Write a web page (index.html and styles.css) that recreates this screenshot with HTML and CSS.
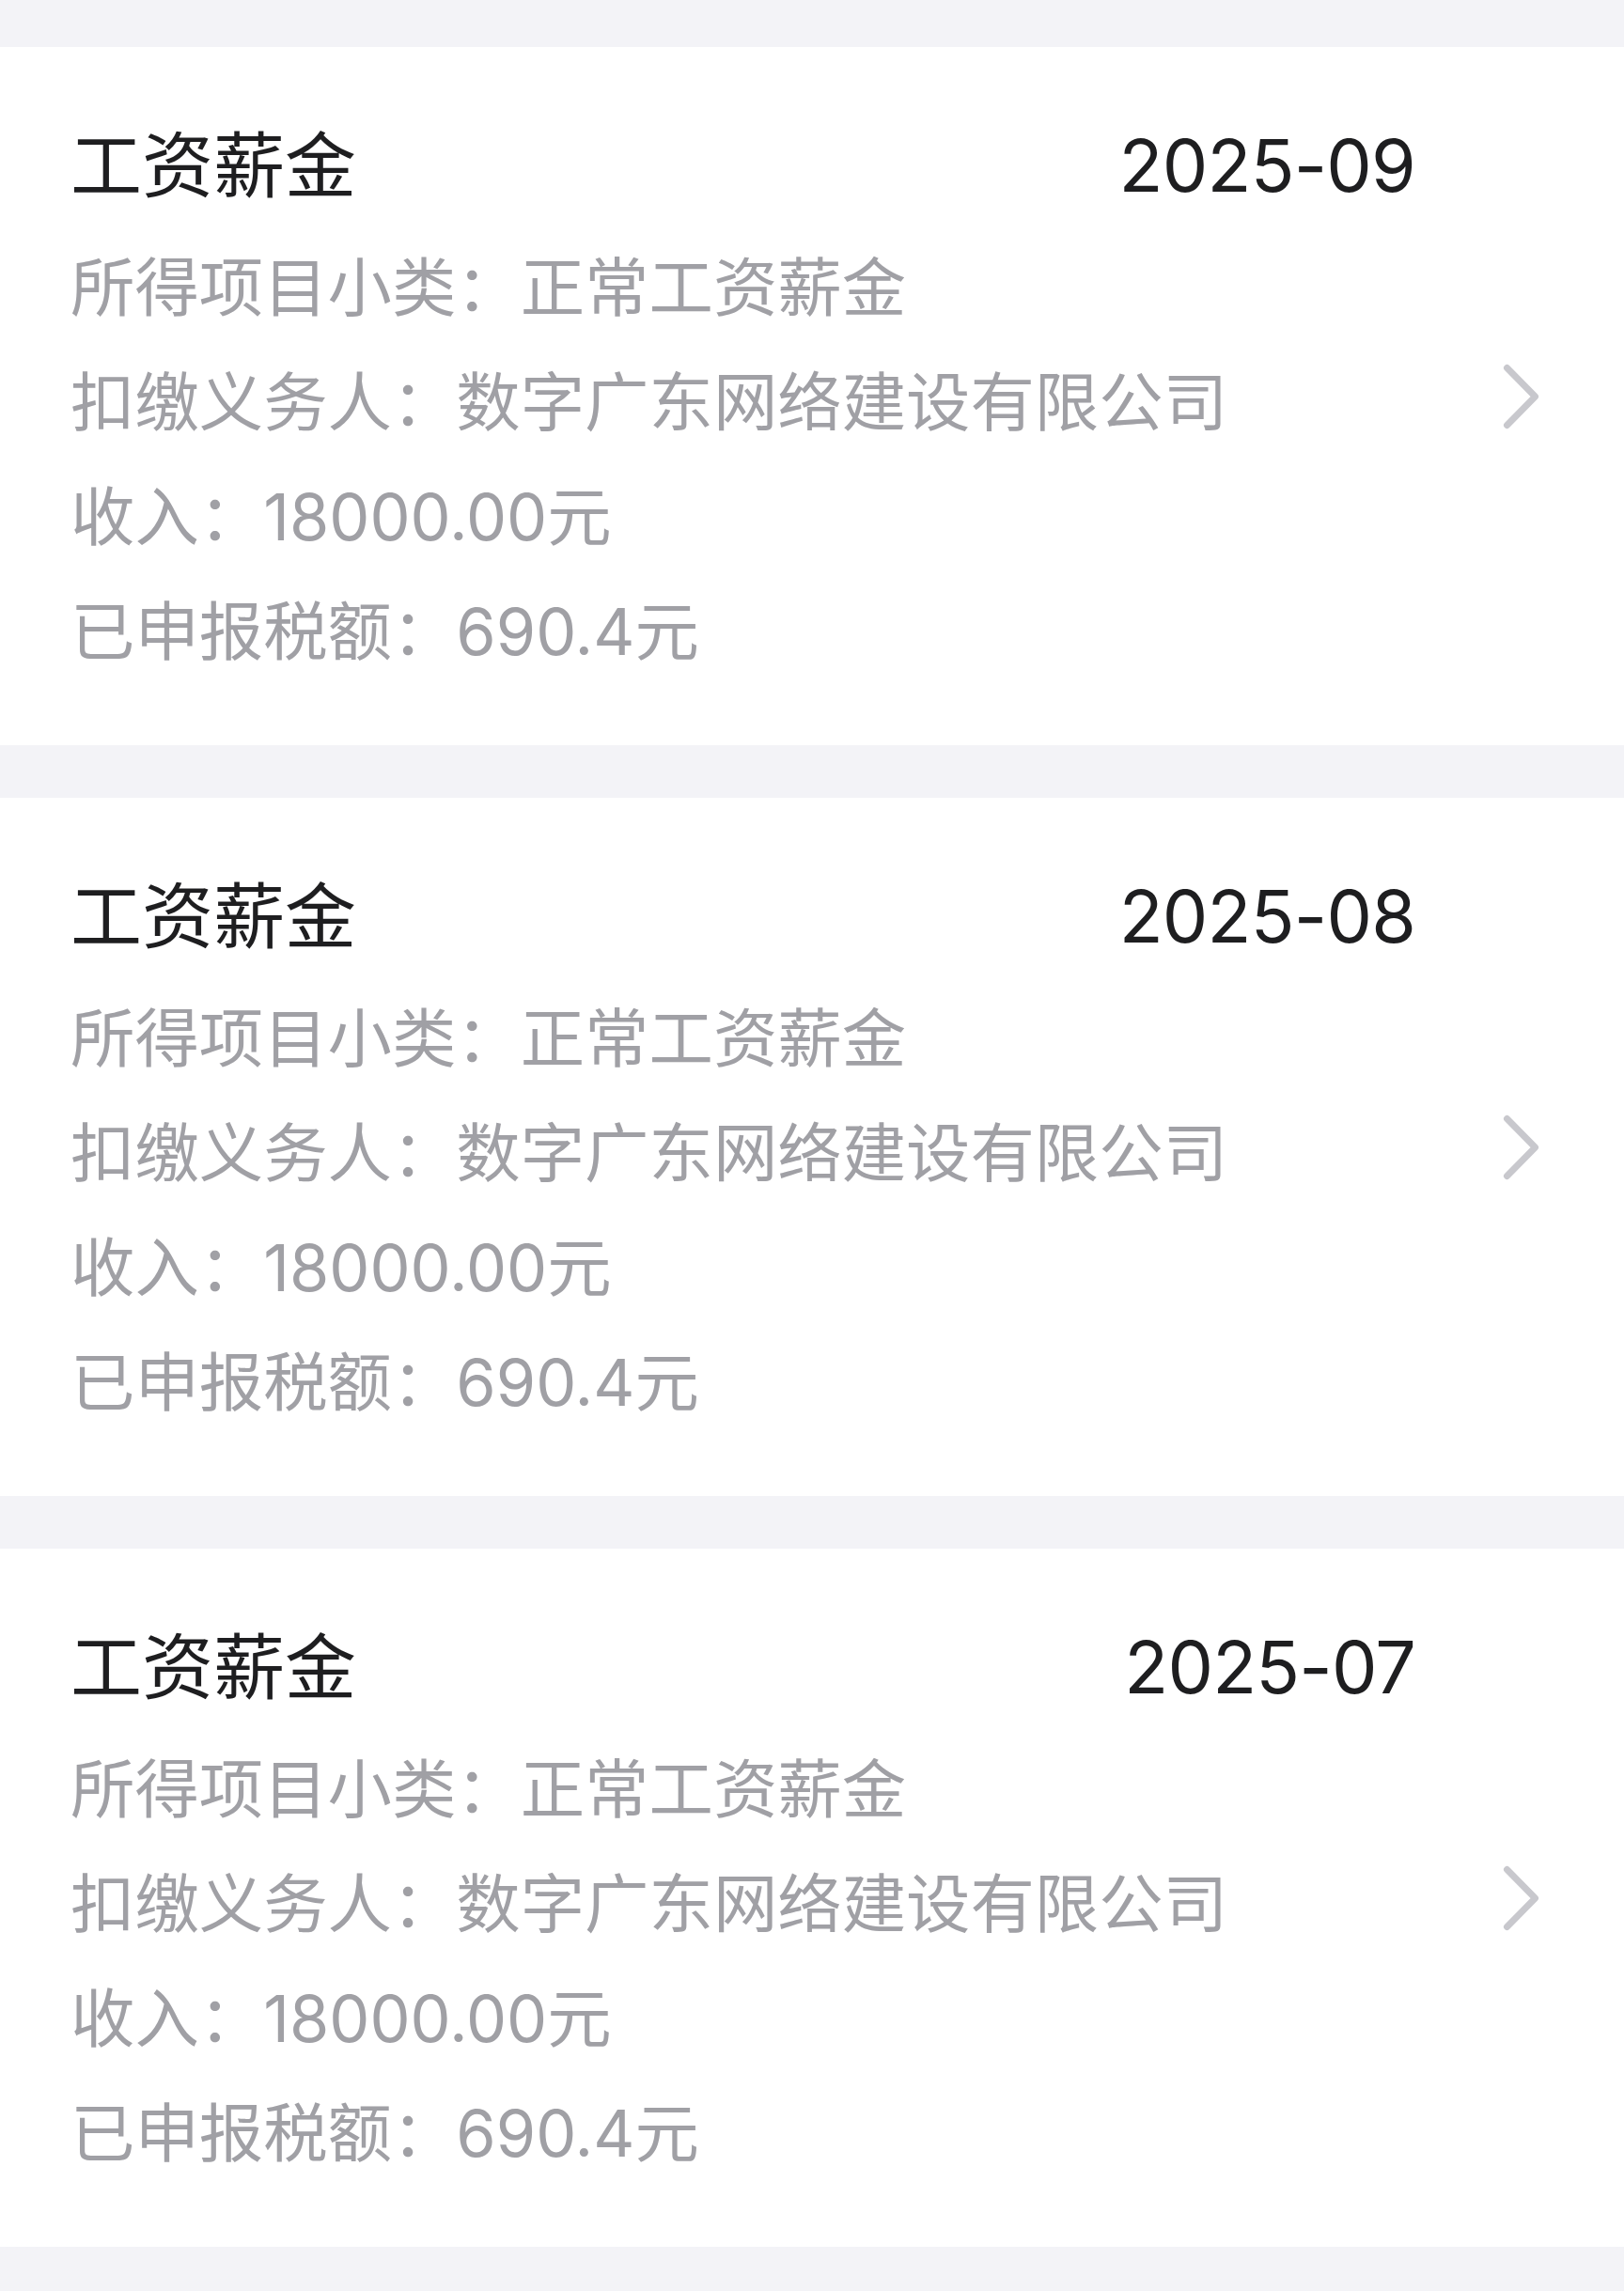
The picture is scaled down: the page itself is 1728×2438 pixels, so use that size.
FILE: index.html
```html
<!DOCTYPE html>
<html lang="zh-CN">
<head>
<meta charset="utf-8">
<title>收入纳税明细</title>
<link rel="stylesheet" href="styles.css">
</head>
<body>
<div class="list">
  <div class="card">
    <div class="content">
      <div class="head">
        <span class="title">工资薪金</span>
        <span class="date">2025-09</span>
      </div>
      <div class="row">所得项目小类：正常工资薪金</div>
      <div class="row">扣缴义务人：数字广东网络建设有限公司</div>
      <div class="row">收入：18000.00元</div>
      <div class="row">已申报税额：690.4元</div>
    </div>
    <svg class="chev" viewBox="0 0 48 80" width="48" height="80"><path d="M7.5 9.5 L37.5 40 L7.5 70.5" fill="none" stroke="#c8c8cd" stroke-width="7" stroke-linecap="round" stroke-linejoin="round"/></svg>
  </div>
  <div class="card">
    <div class="content">
      <div class="head">
        <span class="title">工资薪金</span>
        <span class="date">2025-08</span>
      </div>
      <div class="row">所得项目小类：正常工资薪金</div>
      <div class="row">扣缴义务人：数字广东网络建设有限公司</div>
      <div class="row">收入：18000.00元</div>
      <div class="row">已申报税额：690.4元</div>
    </div>
    <svg class="chev" viewBox="0 0 48 80" width="48" height="80"><path d="M7.5 9.5 L37.5 40 L7.5 70.5" fill="none" stroke="#c8c8cd" stroke-width="7" stroke-linecap="round" stroke-linejoin="round"/></svg>
  </div>
  <div class="card">
    <div class="content">
      <div class="head">
        <span class="title">工资薪金</span>
        <span class="date">2025-07</span>
      </div>
      <div class="row">所得项目小类：正常工资薪金</div>
      <div class="row">扣缴义务人：数字广东网络建设有限公司</div>
      <div class="row">收入：18000.00元</div>
      <div class="row">已申报税额：690.4元</div>
    </div>
    <svg class="chev" viewBox="0 0 48 80" width="48" height="80"><path d="M7.5 9.5 L37.5 40 L7.5 70.5" fill="none" stroke="#c8c8cd" stroke-width="7" stroke-linecap="round" stroke-linejoin="round"/></svg>
  </div>
</div>
</body>
</html>
```
FILE: styles.css
```css
html, body {
  margin: 0;
  padding: 0;
}
body {
  background: #f3f3f7;
  font-family: Inter, "Noto Sans CJK SC", sans-serif;
  min-height: 2438px;
}
.list {
  display: flex;
  flex-direction: column;
  gap: 56px;
  padding-top: 50px;
}
.card {
  background: #ffffff;
  display: flex;
  align-items: center;
  padding: 0 84px 0 75px;
  height: 743px;
  box-sizing: border-box;
}
.content {
  flex: 1;
  padding: 58px 0 60px;
}
.head {
  display: flex;
  justify-content: space-between;
  align-items: center;
  height: 137px;
}
.title {
  font-size: 76px;
  line-height: 137px;
  color: #1e1e20;
}
.date {
  font-size: 77px;
  line-height: 137px;
  color: #1e1e20;
  letter-spacing: -0.8px;
}
.row {
  font-size: 68.4px;
  line-height: 122px;
  color: #a0a0a5;
  white-space: nowrap;
}
.chev {
  flex: none;
  margin-left: 90px;
  display: block;
}
```
